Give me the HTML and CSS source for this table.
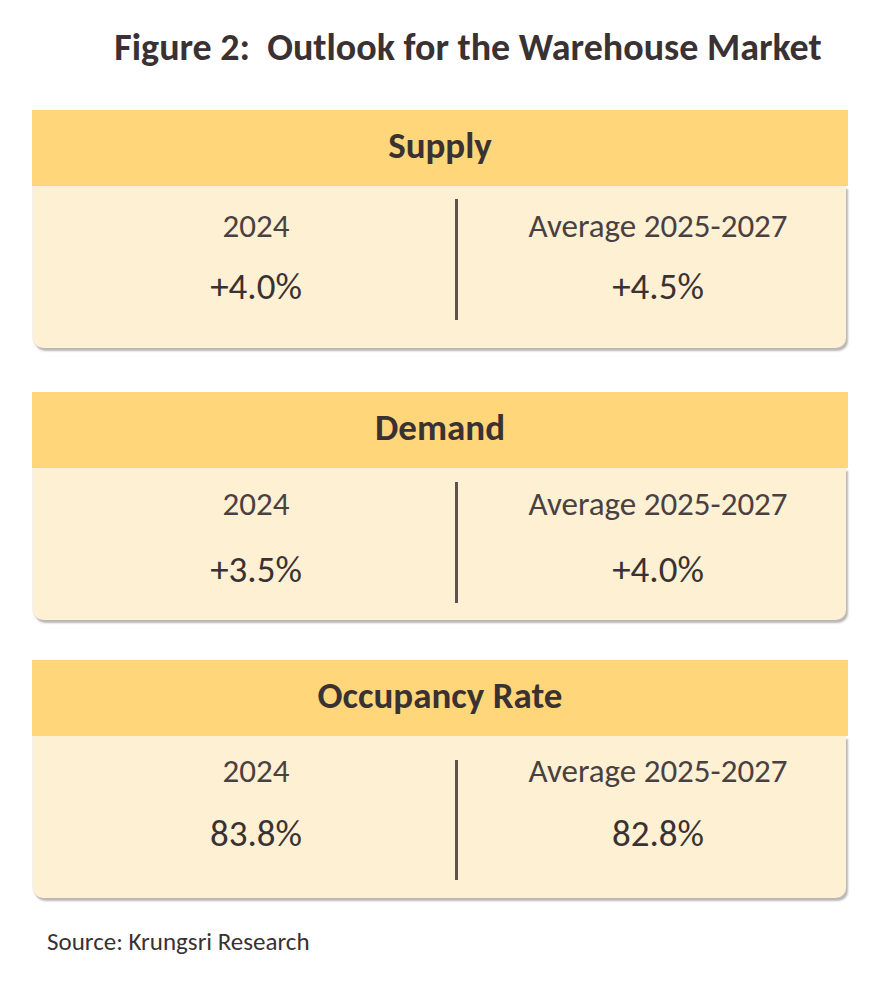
FILE: index.html
```html
<!DOCTYPE html>
<html lang="en">
<head>
<meta charset="utf-8">
<title>Figure 2: Outlook for the Warehouse Market</title>
<link rel="stylesheet" href="styles.css">
</head>
<body>
<main class="page">
  <h1 class="title">Figure 2:&nbsp; Outlook for the Warehouse Market</h1>

  <section class="card card--supply">
    <h2 class="card-head">Supply</h2>
    <div class="card-body">
      <div class="col col--left">
        <div class="label">2024</div>
        <div class="value">+4.0%</div>
      </div>
      <div class="divider"></div>
      <div class="col col--right">
        <div class="label">Average 2025-2027</div>
        <div class="value">+4.5%</div>
      </div>
    </div>
  </section>

  <section class="card card--demand">
    <h2 class="card-head">Demand</h2>
    <div class="card-body">
      <div class="col col--left">
        <div class="label">2024</div>
        <div class="value">+3.5%</div>
      </div>
      <div class="divider"></div>
      <div class="col col--right">
        <div class="label">Average 2025-2027</div>
        <div class="value">+4.0%</div>
      </div>
    </div>
  </section>

  <section class="card card--occupancy">
    <h2 class="card-head">Occupancy Rate</h2>
    <div class="card-body">
      <div class="col col--left">
        <div class="label">2024</div>
        <div class="value">83.8%</div>
      </div>
      <div class="divider"></div>
      <div class="col col--right">
        <div class="label">Average 2025-2027</div>
        <div class="value">82.8%</div>
      </div>
    </div>
  </section>

  <p class="source">Source: Krungsri Research</p>
</main>
</body>
</html>
```

FILE: styles.css
```css
* {
  box-sizing: border-box;
}

html, body {
  margin: 0;
  padding: 0;
  background: #ffffff;
}

body {
  font-family: Carlito, Calibri, "Open Sans", "DejaVu Sans", sans-serif;
  color: #3a3133;
}

.page {
  width: 870px;
  padding-top: 24px;
}

.title {
  margin: 0 0 40px 0;
  padding-left: 66px;
  font-size: 38px;
  line-height: 46px;
  font-weight: 700;
  text-align: center;
  color: #3a3133;
}

.card {
  margin: 0 22px 0 32px;
  width: 816px;
}

.card--supply {
  margin-bottom: 44px;
}

.card--demand {
  margin-bottom: 40px;
}

.card-head {
  margin: 0;
  height: 76px;
  display: flex;
  align-items: center;
  justify-content: center;
  background: #ffd77a;
  font-size: 37px;
  font-weight: 700;
  color: #3a3133;
  padding-bottom: 5px;
}

.card-body {
  margin: 0 2px 0 1px;
  display: flex;
  align-items: flex-start;
  background: #fef0d2;
  border-radius: 0 0 10px 10px;
  box-shadow: 2px 3px 2px rgba(60, 50, 50, 0.35), -1px 0 1px rgba(0, 0, 0, 0.06);
}

.col {
  display: flex;
  flex-direction: column;
  align-items: center;
}

.col--left {
  width: 422px;
  padding-left: 24px;
}

.col--right {
  flex: 1;
  padding-left: 12px;
}

.label {
  font-size: 33px;
  line-height: 40px;
  color: #4a4042;
  white-space: nowrap;
}

.value {
  font-size: 37px;
  line-height: 44px;
  color: #3a3133;
  white-space: nowrap;
}

.divider {
  width: 3px;
  background: #5f514c;
  flex: none;
}

/* per-card vertical rhythm */
.card--supply .card-body { height: 162px; }
.card--supply .col { padding-top: 20px; }
.card--supply .value { margin-top: 19px; }
.card--supply .divider { margin-top: 13px; height: 121px; }

.card--demand .card-body { height: 152px; }
.card--demand .col { padding-top: 16px; }
.card--demand .value { margin-top: 24px; }
.card--demand .divider { margin-top: 14px; height: 121px; }

.card--occupancy .card-body { height: 162px; }
.card--occupancy .col { padding-top: 15px; }
.card--occupancy .value { margin-top: 21px; }
.card--occupancy .divider { margin-top: 24px; height: 120px; }

.source {
  margin: 29px 0 0 47px;
  font-size: 25px;
  line-height: 30px;
  color: #3a3133;
}
```
